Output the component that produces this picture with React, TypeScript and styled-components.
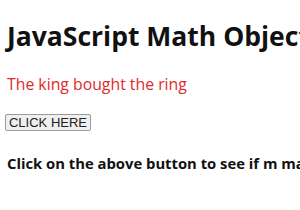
import React from 'react';
import styled, { createGlobalStyle } from 'styled-components';

const GlobalStyle = createGlobalStyle`
  html, body {
    margin: 0;
    padding: 0;
    background: #ffffff;
    overflow: hidden;
  }
  body {
    font-family: "Open Sans", "Noto Sans", sans-serif;
  }
`;

const Page = styled.div`
  display: flex;
  flex-direction: column;
  align-items: flex-start;
  padding: 20px 0 0 7px;
  width: 300px;
  height: 210px;
  box-sizing: border-box;
  overflow: hidden;
`;

const Title = styled.h1`
  margin: 0;
  font-size: 26.5px;
  line-height: 32px;
  font-weight: 700;
  color: #111111;
  white-space: nowrap;
`;

const Message = styled.p`
  margin: 20px 0 0;
  font-size: 15.8px;
  line-height: 24px;
  color: #de2a2a;
  white-space: nowrap;
`;

const ActionButton = styled.button`
  margin: 18px 0 0 -2px;
  height: 17px;
  width: 86px;
  padding: 0;
  font-family: "Liberation Sans", Arial, sans-serif;
  font-size: 13px;
  color: #222222;
  background: #efefef;
  border: 1px solid #9a9a9a;
  border-radius: 2px;
`;

const Hint = styled.h4`
  margin: 20px 0 0;
  font-size: 14.8px;
  line-height: 24px;
  font-weight: 700;
  color: #111111;
  white-space: nowrap;
`;

const App: React.FC = () => {
  return (
    <>
      <GlobalStyle />
      <Page>
        <Title>JavaScript Math Object</Title>
        <Message>The king bought the ring</Message>
        <ActionButton>CLICK HERE</ActionButton>
        <Hint>Click on the above button to see if m matches</Hint>
      </Page>
    </>
  );
};

export default App;
